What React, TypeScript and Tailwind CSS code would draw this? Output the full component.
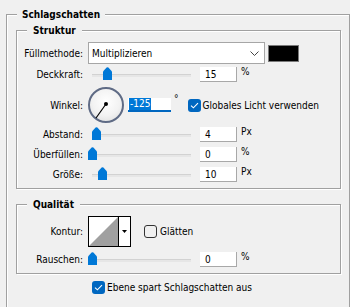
import React from "react";

const FONT = "'DejaVu Sans Condensed', 'DejaVu Sans', sans-serif";

function Thumb() {
  return (
    <svg width="9" height="13" viewBox="0 0 9 13" className="block">
      <path d="M0 4.5 L3.6 0.6 Q4.5 -0.2 5.4 0.6 L9 4.5 L9 13 L0 13 Z" fill="#0078d7" />
    </svg>
  );
}

function Slider({ offset }: { offset: number }) {
  return (
    <div className="relative w-[103px] h-[15px]">
      <div className="absolute left-[4px] top-[7px] w-[99px] h-[3px] bg-[#e6e6e6] border-t border-[#d2d2d2]" />
      <div className="absolute top-0" style={{ left: offset }}>
        <Thumb />
      </div>
    </div>
  );
}

function NumBox({ value }: { value: string }) {
  return (
    <div className="w-[37px] h-[15px] bg-white border-b border-r border-[#a8a8a8] pl-[5px] leading-[15px] text-black">
      {value}
    </div>
  );
}

function Label({ children }: { children: React.ReactNode }) {
  return <div className="w-[66px] text-right whitespace-nowrap text-black">{children}</div>;
}

function SliderRow({ label, offset, value, unit, mt }: { label: string; offset: number; value: string; unit: string; mt: string }) {
  return (
    <div className={`flex items-center h-[15px] ${mt}`}>
      <Label>{label}</Label>
      <div className="ml-[5px]">
        <Slider offset={offset} />
      </div>
      <div className="ml-[9px]">
        <NumBox value={value} />
      </div>
      <div className="ml-[4px] self-start -mt-[2px] leading-[13px]">{unit}</div>
    </div>
  );
}

function CheckedBox() {
  return (
    <div className="w-[13px] h-[13px] rounded-[3px] bg-[#0067c0] flex items-center justify-center">
      <svg width="9" height="7" viewBox="0 0 9 7">
        <path d="M1 3.6 L3.4 5.8 L8 1.2" stroke="#fff" strokeWidth="1.1" fill="none" />
      </svg>
    </div>
  );
}

function EmptyBox() {
  return <div className="w-[13px] h-[13px] rounded-[3px] border border-[#333] bg-[#f0f0f0]" />;
}

function Dial() {
  return (
    <div className="w-[36px] h-[36px] rounded-full border-2 border-[#5f6b85] bg-[radial-gradient(circle_at_50%_40%,#ffffff_0%,#f2f2f2_55%,#d9d9d9_100%)] relative">
      <svg width="36" height="36" viewBox="0 0 36 36" className="absolute -left-[2px] -top-[2px]">
        <line x1="18" y1="17" x2="8" y2="31" stroke="#000" strokeWidth="1.2" />
        <circle cx="18" cy="17" r="2" fill="#000" />
      </svg>
    </div>
  );
}

export default function App() {
  return (
    <div
      className="w-[350px] h-[307px] overflow-hidden bg-[#f0f0f0] pt-[8px] pl-[6px] text-[10px] text-black"
      style={{ fontFamily: FONT }}
    >
      <fieldset className="w-[344px] h-[320px] border border-[#a0a0a0] shadow-[inset_1px_1px_0_#ffffff,1px_1px_0_#ffffff]">
        <legend className="ml-[10px] px-[5px] h-[13px] leading-[13px] font-bold bg-[#f0f0f0]">Schlagschatten</legend>

        <fieldset className="mt-[3px] ml-[9px] w-[325px] border border-[#a0a0a0] shadow-[inset_1px_1px_0_#ffffff,1px_1px_0_#ffffff] pb-[6px]">
          <legend className="ml-[10px] px-[6px] h-[13px] leading-[13px] font-bold bg-[#f0f0f0]">Struktur</legend>

          <div className="flex items-center h-[22px] mt-[5px]">
            <Label>Füllmethode:</Label>
            <div className="ml-[5px] w-[177px] h-[22px] bg-white border border-[#a6a6a6] flex items-center pl-[3px] pr-[5px] justify-between">
              <span>Multiplizieren</span>
              <svg width="9" height="5" viewBox="0 0 9 5">
                <path d="M0.5 0.5 L4.5 4.5 L8.5 0.5" stroke="#444" strokeWidth="1" fill="none" />
              </svg>
            </div>
            <div className="ml-[3px] w-[31px] h-[17px] bg-black border border-[#7a7a7a]" />
          </div>

          <SliderRow label="Deckkraft:" offset={15} value="15" unit="%" mt="mt-[3px]" />

          <div className="flex items-center h-[36px] mt-[5px]">
            <Label>Winkel:</Label>
            <div className="ml-[5px]">
              <Dial />
            </div>
            <div className="ml-[4px] w-[43px] h-[14px] bg-white border-b-2 border-[#0067c0] flex items-start -mt-[1px]">
              <span className="bg-[#0078d7] text-white leading-[12px] h-[12px] px-[1px] ml-[1px]">-125</span>
            </div>
            <div className="ml-[3px] self-start mt-[7px] leading-[10px]">°</div>
            <div className="ml-[9px] flex items-center">
              <CheckedBox />
              <span className="ml-[2px] whitespace-nowrap">Globales Licht verwenden</span>
            </div>
          </div>

          <SliderRow label="Abstand:" offset={4} value="4" unit="Px" mt="mt-[4px]" />
          <SliderRow label="Überfüllen:" offset={0} value="0" unit="%" mt="mt-[5px]" />
          <SliderRow label="Größe:" offset={10} value="10" unit="Px" mt="mt-[5px]" />
        </fieldset>

        <fieldset className="mt-[9px] ml-[9px] w-[325px] border border-[#a0a0a0] shadow-[inset_1px_1px_0_#ffffff,1px_1px_0_#ffffff] pb-[6px]">
          <legend className="ml-[10px] px-[6px] h-[13px] leading-[13px] font-bold bg-[#f0f0f0]">Qualität</legend>

          <div className="flex items-center h-[31px] mt-[5px]">
            <Label>Kontur:</Label>
            <div className="ml-[5px] w-[43px] h-[31px] border border-black bg-white flex">
              <svg width="29" height="29" viewBox="0 0 29 29" className="block">
                <polygon points="0,29 29,0 29,29" fill="#a0a0a0" />
              </svg>
              <div className="w-[1px] h-[29px] bg-black" />
              <div className="flex-1 flex items-center justify-center">
                <svg width="5" height="3" viewBox="0 0 5 3">
                  <polygon points="0,0 5,0 2.5,3" fill="#000" />
                </svg>
              </div>
            </div>
            <div className="ml-[13px] flex items-center">
              <EmptyBox />
              <span className="ml-[3px]">Glätten</span>
            </div>
          </div>

          <SliderRow label="Rauschen:" offset={0} value="0" unit="%" mt="mt-[5px]" />
        </fieldset>

        <div className="mt-[6px] ml-[85px] flex items-center">
          <CheckedBox />
          <span className="ml-[2px] whitespace-nowrap">Ebene spart Schlagschatten aus</span>
        </div>
      </fieldset>
    </div>
  );
}
